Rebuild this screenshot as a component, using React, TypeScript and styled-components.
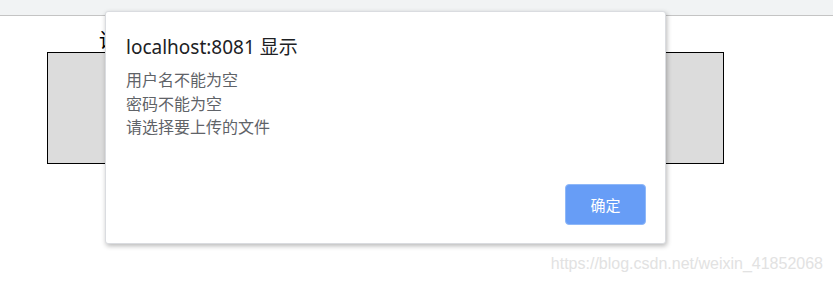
import React from "react";
import styled, { createGlobalStyle } from "styled-components";

const GlobalStyle = createGlobalStyle`
  html, body {
    margin: 0;
    padding: 0;
    background: #ffffff;
    font-family: "Noto Sans CJK SC", "Liberation Sans", sans-serif;
  }
`;

const messages = ["用户名不能为空", "密码不能为空", "请选择要上传的文件"];

const App: React.FC = () => {
  return (
    <Page>
      <GlobalStyle />
      <TopStrip />
      <Content>
        <Heading>请</Heading>
        <GreyBox />
      </Content>

      <Dialog>
        <DialogTitle>localhost:8081 显示</DialogTitle>
        <MessageList>
          {messages.map((msg) => (
            <Message key={msg}>{msg}</Message>
          ))}
        </MessageList>
        <ButtonRow>
          <OkButton>确定</OkButton>
        </ButtonRow>
      </Dialog>

      <Watermark>https://blog.csdn.net/weixin_41852068</Watermark>
    </Page>
  );
};

export default App;

const Page = styled.div`
  position: relative;
  width: 833px;
  height: 284px;
  overflow: hidden;
  background: #ffffff;
`;

const TopStrip = styled.div`
  height: 15px;
  background-color: #f1f3f4;
  border-bottom: 1px solid #c4c4c4;
`;

const Content = styled.div`
  padding: 11px 0 0 47px;
`;

const Heading = styled.div`
  padding-left: 52px;
  font-size: 20px;
  line-height: 25px;
  color: #000000;
`;

const GreyBox = styled.div`
  width: 675px;
  height: 110px;
  background-color: #dcdcdc;
  border: 1px solid #000000;
`;

const Dialog = styled.div`
  position: absolute;
  left: 105px;
  top: 11px;
  width: 561px;
  height: 233px;
  box-sizing: border-box;
  padding: 23px 19px 18px 20px;
  display: flex;
  flex-direction: column;
  background-color: #ffffff;
  border-radius: 3px;
  border: 1px solid #dadce0;
  box-shadow: 1px 2px 5px rgba(0, 0, 0, 0.28);
`;

const DialogTitle = styled.div`
  font-family: "Noto Sans", "Noto Sans CJK SC", sans-serif;
  font-size: 19px;
  line-height: 25px;
  color: #202124;
`;

const MessageList = styled.div`
  margin-top: 8px;
  display: flex;
  flex-direction: column;
`;

const Message = styled.div`
  font-size: 16px;
  line-height: 23.5px;
  color: #5f6368;
`;

const ButtonRow = styled.div`
  margin-top: auto;
  display: flex;
  justify-content: flex-end;
`;

const OkButton = styled.button`
  width: 81px;
  height: 41px;
  background-color: #679df6;
  border: 1px solid #8fb8f8;
  border-radius: 4px;
  color: #ffffff;
  font-family: "Noto Sans CJK SC", sans-serif;
  font-size: 15px;
  padding: 0;
`;

const Watermark = styled.div`
  position: absolute;
  right: 10px;
  top: 253px;
  font-family: "Liberation Sans", Arial, sans-serif;
  font-size: 16px;
  line-height: 22px;
  color: #e2e2e2;
`;
